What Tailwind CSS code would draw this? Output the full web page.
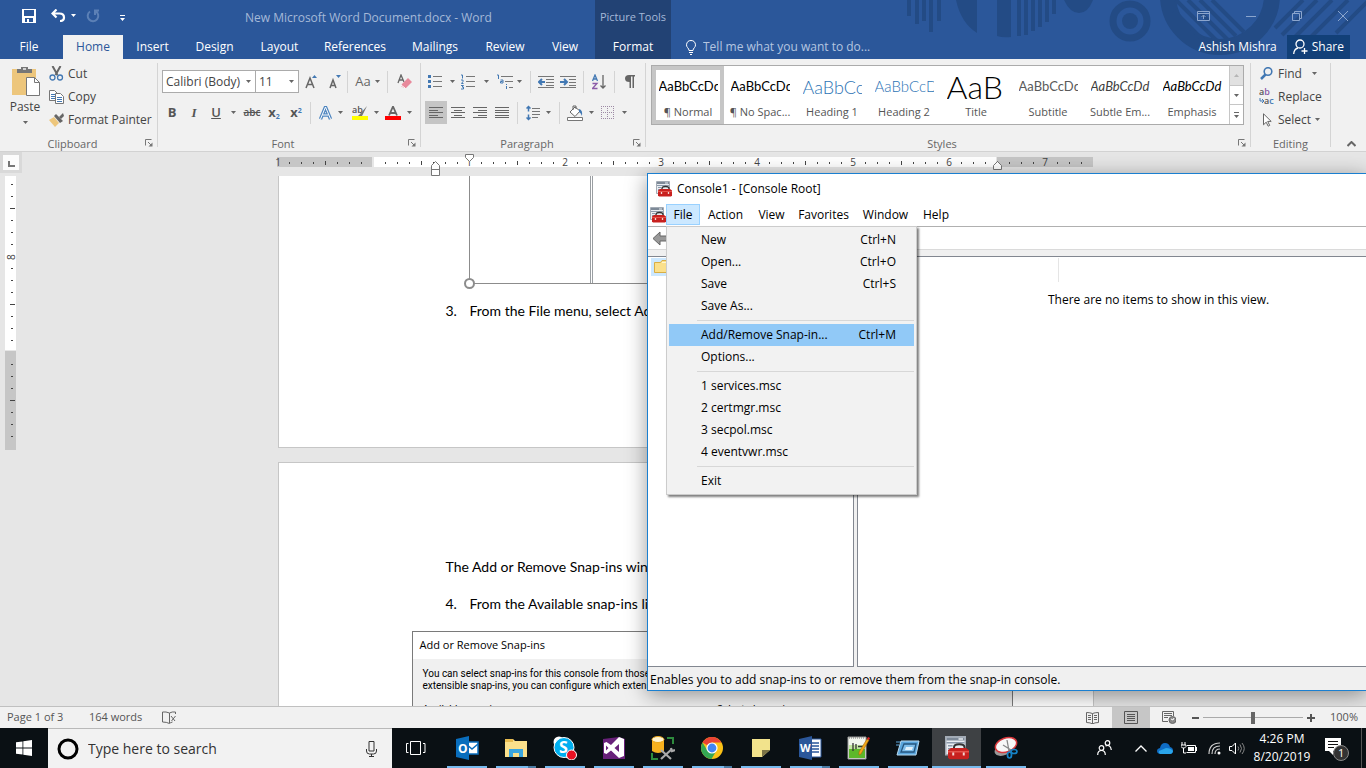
<!DOCTYPE html>
<html lang="en">
<head>
    <meta charset="UTF-8">
    <meta name="viewport" content="width=device-width, initial-scale=1.0">
    <title>New Microsoft Word Document.docx - Word</title>
    <script src="https://cdn.jsdelivr.net/npm/@tailwindcss/browser@4"></script>
</head>
<body class="flex flex-col h-screen overflow-hidden bg-[#e6e6e6] font-['Open_Sans',sans-serif] text-xs text-[#444]">
    <!-- Shared symbols -->
    <svg class="hidden">
        <symbol id="caret" viewBox="0 0 5 3"><path d="M0 0h5L2.500 3z" fill="#666"/></symbol>
        <symbol id="launcher" viewBox="0 0 8 8"><path d="M.5 6.500v-6h6M3 3l3 3" fill="none" stroke="#777"/><path d="M7.500 3.500v4h-4z" fill="#777"/></symbol>
        <symbol id="toolbox" viewBox="0 0 16 16">
            <path d="M.5 .5h13v12H.5z" fill="#e9edf1" stroke="#a3abb5"/>
            <path d="M1 1h12v2H1z" fill="#7d8997"/><path d="M9 2h3" stroke="#e9edf1"/>
            <path d="M1 4.500h12M2 6.500h3M2 8.500h3M2 10.500h2" stroke="#8c9aab"/>
            <path d="M6 9V7.500Q6 5.500 9.500 5.500T13 7.500V9" fill="none" stroke="#333" stroke-width="1.300"/>
            <path d="M2 9.500l2-1.500h10l2 1.500v5l-1 1H3l-1-1z" fill="#c8211f"/><path d="M2 10.500h14" stroke="#e5534b"/>
            <path d="M5.500 11v2M12.500 11v2" stroke="#f3d4d0" stroke-width="1.300"/>
        </symbol>
    </svg>

    <!-- Title bar and tabs -->
    <header class="relative flex shrink-0 bg-[#2b579a] text-white">
        <svg class="absolute right-0 top-0 w-[496px] h-[59px]" viewBox="0 0 496 59" fill="none" stroke="#234b85">
            <path d="M39 0v16M47 0v24M54 0v21M61 0v32M69 0v21" stroke-width="4"/>
            <path d="M86 0h21v33Q91 23 86 0zM127 0h14v37q-8 1-14-1z" fill="#234b85" stroke="none"/>
            <path d="M149 0v36M156 0v35M163 0v31M170 0v27M177 0v22M184 0v14" stroke-width="4"/>
            <path d="M194 0h29q-5 13-14 13T194 0z" fill="#234b85" stroke="none"/>
            <circle cx="260" cy="21" r="17" stroke-width="7"/><circle cx="260" cy="21" r="8" fill="#234b85" stroke="none"/>
            <circle cx="350" cy="-5" r="52" stroke-width="16"/>
            <path d="M306 0l44 44M318 0l40 40M330 0l36 36M342 0l32 32M304 11l34 34" stroke-width="4"/>
            <path d="M405 28l28-28M412 35l35-35M425 37l37-37M440 38l38-38M466 33l33-33" stroke-width="4"/>
        </svg>
        <div class="relative flex flex-col w-[595px]">
            <div class="flex items-center h-[35px] pl-[22px]">
                <button aria-label="Save"><svg class="w-[14px] h-[14px] -mt-1" viewBox="0 0 14 14"><path d="M0 0h14v14H0z" fill="#fff"/><path d="M2 1h10v6H2zM3 9h8v4H7v-3H5v3H3z" fill="#2b579a"/></svg></button>
                <button aria-label="Undo" class="flex items-center gap-[5px] ml-[15px] -mt-1"><svg class="w-[15px] h-[13px]" viewBox="0 0 15 13" fill="none" stroke="#fff" stroke-width="2.200"><path d="M5.500 .5L1.500 4.500l4 4M2 4.500h6.500q4.500 0 4.500 4 0 3.500-4 3.500"/></svg><svg class="w-[5px] h-[3px]" viewBox="0 0 5 3"><path d="M0 0h5L2.500 3z" fill="#fff"/></svg></button>
                <button aria-label="Repeat" class="ml-[10px] -mt-1"><svg class="w-[14px] h-[14px]" viewBox="0 0 14 14" fill="none" stroke="#5c80b6" stroke-width="2"><path d="M4 2.500a5.300 5.300 0 1 0 5.500-.3M9 6V1.500h4"/></svg></button>
                <button aria-label="Customize Quick Access Toolbar" class="ml-5"><svg class="w-[5px] h-[6px]" viewBox="0 0 5 6" fill="#fff"><path d="M0 0h5v1H0zM0 3h5L2.500 6z"/></svg></button>
                <h1 class="flex-1 ml-[120px] text-[#a5b9d8] whitespace-nowrap">New Microsoft Word Document.docx - Word</h1>
            </div>
            <nav class="flex h-6">
                <button class="w-[58px] mr-[5px]">File</button>
                <button class="w-[60px] bg-[#f1f1f1] text-[#2b579a]">Home</button>
                <button class="w-[59px]">Insert</button>
                <button class="w-[65px]">Design</button>
                <button class="w-[65px]">Layout</button>
                <button class="w-[86px]">References</button>
                <button class="w-[74px]">Mailings</button>
                <button class="w-[66px]">Review</button>
                <button class="w-[54px]">View</button>
            </nav>
        </div>
        <div class="relative flex flex-col w-[76px] bg-[#224274]">
            <span class="flex items-center justify-center h-[35px] text-[11px] text-[#a5b9d8] whitespace-nowrap">Picture Tools</span>
            <button class="h-6">Format</button>
        </div>
        <div class="relative flex flex-col flex-1">
            <div class="flex items-center justify-end h-[31px] pr-[18px] gap-8 text-[#8ba5cd]">
                <button aria-label="Ribbon Display Options"><svg class="w-[13px] h-[10px]" viewBox="0 0 13 10" fill="none" stroke="currentColor"><path d="M.5 .5h12v9H.5zM.5 2.500h12M6.500 8V4.500M4.500 6l2-2 2 2"/></svg></button>
                <button aria-label="Minimize"><svg class="w-[10px] h-[10px] ml-1" viewBox="0 0 10 10" stroke="currentColor"><path d="M0 5.500h10"/></svg></button>
                <button aria-label="Restore"><svg class="w-[10px] h-[10px] ml-1" viewBox="0 0 10 10" fill="none" stroke="currentColor"><path d="M.5 2.500h7v7h-7zM2.500 2V.5h7v7H8"/></svg></button>
                <button aria-label="Close"><svg class="w-[10px] h-[10px] ml-1" viewBox="0 0 10 10" stroke="currentColor"><path d="M0 0l10 10M10 0L0 10"/></svg></button>
            </div>
            <div class="flex items-center flex-1 pl-[15px] pr-4 pt-1">
                <label for="tell-me"><svg class="w-[10px] h-[15px]" viewBox="0 0 10 15" fill="none" stroke="#fff"><path d="M3 10.500Q3 9 1.500 7.500.5 6.500 .5 4.800 1 .5 5 .5t4.500 4.300q0 1.700-1 2.700Q7 9 7 10.500zM3 12.500h4M4 14.500h2"/></svg></label>
                <input id="tell-me" class="w-[180px] ml-[7px] bg-transparent placeholder-[#b5c6e0] outline-none" placeholder="Tell me what you want to do...">
                <span class="ml-auto">Ashish Mishra</span>
                <button class="flex items-center gap-1 h-6 ml-[10px] px-1.5 bg-[#124078]"><svg class="w-[15px] h-[16px]" viewBox="0 0 15 16" fill="none" stroke="#fff" stroke-width="1.300"><circle cx="7" cy="5" r="4"/><path d="M.7 15Q1 10 5 9M11.500 9v6M8.500 12h6"/></svg>Share</button>
            </div>
        </div>
    </header>

    <!-- Ribbon -->
    <div class="flex shrink-0 h-[93px] py-1 bg-[#f1f1f1] border-b border-[#d2d2d2]">
        <section class="flex flex-col w-[158px] border-r border-[#d4d4d4]">
            <div class="flex flex-1 pl-[9px] pt-[3px]">
                <button class="flex flex-col items-center w-8 mr-2">
                    <svg class="w-[29px] h-[31px] ml-0.5" viewBox="0 0 29 31"><path d="M0 3h24v26H0z" fill="#edc67c"/><path d="M5 3h4V1h7v2h4v4H5z" fill="#767676"/><path d="M11 3h3" stroke="#f1f1f1" stroke-width="1.500"/><path d="M14.500 11.500h8l5 5v13h-13z" fill="#fff" stroke="#777"/><path d="M22.500 11.500v5h5" fill="none" stroke="#777"/></svg>
                    <span class="mt-0.5">Paste</span>
                    <svg class="w-[5px] h-[3px] mt-1.5"><use href="#caret"/></svg>
                </button>
                <div class="flex flex-col -mt-1">
                    <button class="flex items-center gap-1 h-[23px]"><svg class="w-[15px] h-[15px]" viewBox="0 0 15 15" fill="none"><path d="M3.500 0l5 9M11.500 0l-5 9" stroke="#666" stroke-width="2"/><circle cx="3.500" cy="11.500" r="2.500" stroke="#4278b3" stroke-width="1.300"/><circle cx="11" cy="11.500" r="2.500" stroke="#4278b3" stroke-width="1.300"/></svg>Cut</button>
                    <button class="flex items-center gap-1 h-[23px]"><svg class="w-[15px] h-[14px]" viewBox="0 0 15 14" fill="#fff" stroke="#777"><path d="M.5 .5h5l3 3v7h-8z"/><path d="M2 4.500h4M2 6.500h4M2 8.500h4" stroke="#4278b3"/><path d="M6.500 3.500h5l3 3v7h-8z"/><path d="M8 7.500h5M8 9.500h5M8 11.500h5" stroke="#4278b3"/></svg>Copy</button>
                    <button class="flex items-center gap-1 h-[23px] whitespace-nowrap"><svg class="w-[15px] h-[14px]" viewBox="0 0 15 14"><path d="M0 7l5-3 5 6-4 4z" fill="#edc67c"/><path d="M5 3l2-2 7 7-3 2z" fill="#666"/><path d="M10 4l4-4 1 3-3 3z" fill="#666"/></svg>Format Painter</button>
                </div>
            </div>
            <footer class="flex items-center h-4 pt-2 text-[11px] leading-none text-[#666]"><span class="flex-1 text-center">Clipboard</span><button aria-label="Clipboard settings" class="mr-1"><svg class="w-2 h-2"><use href="#launcher"/></svg></button></footer>
        </section>

        <section class="flex flex-col w-[263px] border-r border-[#d4d4d4]">
            <div class="flex flex-col flex-1 gap-2 pl-1 pt-[7px]">
                <div class="flex items-center h-[23px]">
                    <div class="relative">
                        <select aria-label="Font" class="appearance-none w-[94px] h-[23px] px-[3px] bg-white border border-[#ababab]"><option>Calibri (Body)</option></select>
                        <svg class="absolute right-[5px] top-[10px] w-[5px] h-[3px]"><use href="#caret"/></svg>
                    </div>
                    <div class="relative">
                        <select aria-label="Font size" class="appearance-none w-[43px] h-[23px] px-[3px] bg-white border border-l-0 border-[#ababab]"><option>11</option></select>
                        <svg class="absolute right-[5px] top-[10px] w-[5px] h-[3px]"><use href="#caret"/></svg>
                    </div>
                    <button aria-label="Increase font size" class="flex justify-center w-6"><svg class="w-3 h-[14px]" viewBox="0 0 12 14"><path d="M1 13L5 3l4 10M2.500 9.500h5" fill="none" stroke="#666" stroke-width="1.500"/><path d="M7 3l2.500-3L12 3z" fill="#4278b3"/></svg></button>
                    <button aria-label="Decrease font size" class="flex justify-center w-6"><svg class="w-3 h-[14px]" viewBox="0 0 12 14"><path d="M1 13l3-8 3 8M2 10.500h4" fill="none" stroke="#666" stroke-width="1.500"/><path d="M7 0h5L9.500 3z" fill="#4278b3"/></svg></button>
                    <span class="w-px h-[22px] bg-[#d4d4d4]"></span>
                    <button class="flex items-center justify-center gap-1 w-10 text-[13px] text-[#666]">Aa<svg class="w-[5px] h-[3px]"><use href="#caret"/></svg></button>
                    <span class="w-px h-[22px] bg-[#d4d4d4]"></span>
                    <button aria-label="Clear formatting" class="flex justify-center w-8"><svg class="w-[15px] h-4" viewBox="0 0 15 16"><path d="M1 9l3-8 3 7M2 6h4" fill="none" stroke="#666" stroke-width="1.300"/><path d="M5 10l6-6 4 4-6 6H7l-3-2z" fill="#e8899b"/><path d="M4 11l4 3" stroke="#fff"/></svg></button>
                </div>
                <div class="flex items-center h-[23px]">
                    <button class="w-5 text-[13px] font-bold text-[#555]">B</button>
                    <button class="w-6 text-[13px] font-bold italic font-['Liberation_Serif',serif] text-[#555]">I</button>
                    <button class="w-5 text-[13px] font-semibold underline text-[#555]">U</button>
                    <button aria-label="Underline style" class="flex justify-center w-[14px]"><svg class="w-[5px] h-[3px]"><use href="#caret"/></svg></button>
                    <button class="w-6 text-[10px] font-semibold line-through text-[#555]">abc</button>
                    <button class="w-5 text-[13px] font-bold text-[#555] whitespace-nowrap">x<sub class="text-[7px] text-[#4278b3]">2</sub></button>
                    <button class="w-6 text-[13px] font-bold text-[#555] whitespace-nowrap">x<sup class="text-[7px] text-[#4278b3]">2</sup></button>
                    <span class="w-px h-[22px] mx-0.5 bg-[#d4d4d4]"></span>
                    <button aria-label="Text effects" class="flex items-center justify-center gap-1.5 w-9"><svg class="w-[13px] h-[14px]" viewBox="0 0 13 14" fill="none"><path d="M1.500 13l5-12 5 12M3.500 9h6" stroke="#4f86c0" stroke-width="3.400"/><path d="M1.500 13l5-12 5 12M3.500 9h6" stroke="#fff"/></svg><svg class="w-[5px] h-[3px]"><use href="#caret"/></svg></button>
                    <button aria-label="Text highlight colour" class="flex items-center justify-center gap-1.5 w-[33px]"><svg class="w-4 h-[15px]" viewBox="0 0 16 15"><text x="0" y="8" font-size="9" font-weight="600" fill="#555">ab</text><path d="M15 1L8 9l-2 2h4z" fill="#777"/><path d="M0 11h16v4H0z" fill="#ff0"/></svg><svg class="w-[5px] h-[3px]"><use href="#caret"/></svg></button>
                    <button aria-label="Font colour" class="flex items-center justify-center gap-1.5 w-8"><svg class="w-4 h-[14px]" viewBox="0 0 16 14"><path d="M4 9.500L8 .5l4 9M5.500 7h5" fill="none" stroke="#666" stroke-width="1.800"/><path d="M0 10h16v4H0z" fill="#f00"/></svg><svg class="w-[5px] h-[3px]"><use href="#caret"/></svg></button>
                </div>
            </div>
            <footer class="flex items-center h-4 pt-2 text-[11px] leading-none text-[#666]"><span class="flex-1 text-center">Font</span><button aria-label="Font settings" class="mr-1"><svg class="w-2 h-2"><use href="#launcher"/></svg></button></footer>
        </section>

        <section class="flex flex-col w-[225px] border-r border-[#d4d4d4]">
            <div class="flex flex-col flex-1 gap-2 pl-1 pt-[7px]">
                <div class="flex items-center h-[23px]">
                    <button aria-label="Bullets" class="flex items-center justify-center gap-2 w-[33px]"><svg class="w-[14px] h-[15px]" viewBox="0 0 14 15"><path d="M0 1h3v3H0zM0 6h3v3H0zM0 11h3v3H0z" fill="#4278b3"/><path d="M5 2.500h9M5 7.500h9M5 12.500h9" stroke="#777"/></svg><svg class="w-[5px] h-[3px]"><use href="#caret"/></svg></button>
                    <button aria-label="Numbering" class="flex items-center justify-center gap-2 w-[34px]"><svg class="w-[15px] h-[16px]" viewBox="0 0 15 16"><path d="M0 1h1.500v3.500M0 6h2v1.500L.5 9.500h2M0 11.500h2.500L1 13h1.500v2H0" fill="none" stroke="#4278b3"/><path d="M5 2.500h9M5 7.500h9M5 12.500h9" stroke="#777"/></svg><svg class="w-[5px] h-[3px]"><use href="#caret"/></svg></button>
                    <button aria-label="Multilevel list" class="flex items-center justify-center gap-1 w-[34px]"><svg class="w-[16px] h-[16px]" viewBox="0 0 16 16"><path d="M0 1h1.500v4M3.500 6h2.500v3H3.500V7.500h2M9.500 10v1M9.500 12v3" fill="none" stroke="#4278b3"/><path d="M4 2.500h12M8 7.500h8M12 13.500h4" stroke="#777"/></svg><svg class="w-[5px] h-[3px]"><use href="#caret"/></svg></button>
                    <span class="w-px h-[22px] mx-1 bg-[#d4d4d4]"></span>
                    <button aria-label="Decrease indent" class="flex justify-center w-[22px]"><svg class="w-4 h-3" viewBox="0 0 16 12" stroke="#777"><path d="M0 .5h16M8 3.500h8M8 6.500h8M8 9.500h8M0 11.500h16"/><path d="M7 6H1.500M4 3L1 6l3 3" fill="none" stroke="#4278b3" stroke-width="2"/></svg></button>
                    <button aria-label="Increase indent" class="flex justify-center w-[22px]"><svg class="w-4 h-3" viewBox="0 0 16 12" stroke="#777"><path d="M0 .5h16M9 3.500h7M9 6.500h7M9 9.500h7M0 11.500h16"/><path d="M0 6h6M4 3l3 3-3 3" fill="none" stroke="#4278b3" stroke-width="2"/></svg></button>
                    <span class="w-px h-[22px] mx-1 bg-[#d4d4d4]"></span>
                    <button aria-label="Sort" class="flex justify-center w-[22px]"><svg class="w-[14px] h-4" viewBox="0 0 14 16" fill="none"><path d="M.5 7L3 1l2.500 6M1.500 5h3" stroke="#4278b3" stroke-width="1.300"/><path d="M.5 9.500h4.500l-4.500 5h5" stroke="#8a5ba8" stroke-width="1.300"/><path d="M11 1v13M8.500 11.500L11 14l2.500-2.500" stroke="#666" stroke-width="1.300"/></svg></button>
                    <span class="w-px h-[22px] mx-1 bg-[#d4d4d4]"></span>
                    <button aria-label="Show formatting marks" class="flex justify-center w-[22px]"><svg class="w-[10px] h-[13px]" viewBox="0 0 10 13"><path d="M10 0v1.500H9V13H7.500V1.500H6V13H4.500V7Q0 7 0 3.500T4 0z" fill="#666"/></svg></button>
                </div>
                <div class="flex items-center h-[23px]">
                    <button aria-label="Align left" class="flex items-center justify-center w-[22px] h-[23px] bg-[#c5c5c5]"><svg class="w-[14px] h-[11px]" viewBox="0 0 14 11" stroke="#666"><path d="M0 .5h14M0 3.500h9M0 5.500h14M0 8.500h9M0 10.500h14"/></svg></button>
                    <button aria-label="Center" class="flex justify-center w-[22px]"><svg class="w-[14px] h-[11px]" viewBox="0 0 14 11" stroke="#666"><path d="M0 .5h14M3 3.500h8M0 5.500h14M3 8.500h8M0 10.500h14"/></svg></button>
                    <button aria-label="Align right" class="flex justify-center w-[22px]"><svg class="w-[14px] h-[11px]" viewBox="0 0 14 11" stroke="#666"><path d="M0 .5h14M5 3.500h9M0 5.500h14M5 8.500h9M0 10.500h14"/></svg></button>
                    <button aria-label="Justify" class="flex justify-center w-[22px]"><svg class="w-[14px] h-[11px]" viewBox="0 0 14 11" stroke="#666"><path d="M0 .5h14M0 3.500h14M0 5.500h14M0 8.500h14M0 10.500h14"/></svg></button>
                    <span class="w-px h-[22px] mx-1 bg-[#d4d4d4]"></span>
                    <button aria-label="Line spacing" class="flex items-center justify-center gap-1.5 w-[33px]"><svg class="w-[14px] h-[16px]" viewBox="0 0 14 16"><path d="M2.500 1.500v5M2.500 9.500v5M.5 3.500l2-2 2 2M.5 12.500l2 2 2-2" fill="none" stroke="#4278b3" stroke-width="1.500"/><path d="M6 3.500h8M6 6.500h8M6 9.500h8M6 12.500h6" stroke="#777"/></svg><svg class="w-[5px] h-[3px]"><use href="#caret"/></svg></button>
                    <span class="w-px h-[22px] mx-1 bg-[#d4d4d4]"></span>
                    <button aria-label="Shading" class="flex items-center justify-center gap-1.5 w-[33px]"><svg class="w-4 h-[16px]" viewBox="0 0 16 16"><path d="M3 7l5-5 5 4-5 5.500z" fill="#fff" stroke="#666"/><path d="M6 5V1h3v3" fill="none" stroke="#666"/><path d="M12 4q4 1 3 7-1-3-3-4z" fill="#4278b3"/><path d="M.5 12.500h15v3H.5z" fill="#fff" stroke="#777"/></svg><svg class="w-[5px] h-[3px]"><use href="#caret"/></svg></button>
                    <button aria-label="Borders" class="flex items-center justify-center gap-2 w-[34px]"><svg class="w-[13px] h-[13px]" viewBox="0 0 13 13" fill="none" stroke="#9d8aa5" stroke-dasharray="1 1"><path d="M0 .5h13M0 6.500h13M0 12.500h13M.5 0v13M6.500 0v13M12.500 0v13"/></svg><svg class="w-[5px] h-[3px]"><use href="#caret"/></svg></button>
                </div>
            </div>
            <footer class="flex items-center h-4 pt-2 text-[11px] leading-none text-[#666]"><span class="flex-1 text-center">Paragraph</span><button aria-label="Paragraph settings" class="mr-1"><svg class="w-2 h-2"><use href="#launcher"/></svg></button></footer>
        </section>

        <section class="flex flex-col flex-1 border-r border-[#d4d4d4]">
            <div class="flex-1 pl-[5px] pr-1.5 pt-0.5">
                <div class="flex h-[60px] bg-white border border-[#ababab] text-[11px] text-[#555]">
                    <div class="flex flex-1 overflow-hidden">
                        <button class="flex flex-col items-center justify-between w-[72px] h-[58px] pt-0.5 border-4 border-[#c6c6c6]"><span class="flex items-center w-[59px] h-[30px] overflow-hidden text-[13px] text-black font-['Lato',sans-serif]">AaBbCcDd</span><span class="whitespace-nowrap leading-4">¶ Normal</span></button>
                        <button class="flex flex-col items-center justify-between w-[72px] h-[58px] pt-1.5 pb-1"><span class="flex items-center w-[59px] h-[30px] overflow-hidden text-[13px] text-black font-['Lato',sans-serif]">AaBbCcDd</span><span class="whitespace-nowrap leading-4">¶ No Spac...</span></button>
                        <button class="flex flex-col items-center justify-between w-[72px] h-[58px] pt-1.5 pb-1"><span class="flex items-center w-[59px] h-[30px] overflow-hidden text-lg text-[#2e74b5] font-light font-['Lato',sans-serif]">AaBbCc</span><span class="whitespace-nowrap leading-4">Heading 1</span></button>
                        <button class="flex flex-col items-center justify-between w-[72px] h-[58px] pt-1.5 pb-1"><span class="flex items-center w-[59px] h-[30px] overflow-hidden text-[15px] text-[#2e74b5] font-light font-['Lato',sans-serif]">AaBbCcD</span><span class="whitespace-nowrap leading-4">Heading 2</span></button>
                        <button class="flex flex-col items-center justify-between w-[72px] h-[58px] pt-1.5 pb-1"><span class="flex items-center w-[59px] h-[30px] overflow-hidden text-[32px] text-black font-light font-['Lato',sans-serif]">AaB</span><span class="whitespace-nowrap leading-4">Title</span></button>
                        <button class="flex flex-col items-center justify-between w-[72px] h-[58px] pt-1.5 pb-1"><span class="flex items-center w-[59px] h-[30px] overflow-hidden text-[13px] text-[#5a5a5a] font-['Lato',sans-serif]">AaBbCcDd</span><span class="whitespace-nowrap leading-4">Subtitle</span></button>
                        <button class="flex flex-col items-center justify-between w-[72px] h-[58px] pt-1.5 pb-1"><span class="flex items-center w-[59px] h-[30px] overflow-hidden text-[13px] italic text-[#404040] font-['Lato',sans-serif]">AaBbCcDd</span><span class="whitespace-nowrap leading-4">Subtle Em...</span></button>
                        <button class="flex flex-col items-center justify-between w-[72px] h-[58px] pt-1.5 pb-1"><span class="flex items-center w-[59px] h-[30px] overflow-hidden text-[13px] italic text-black font-['Lato',sans-serif]">AaBbCcDd</span><span class="whitespace-nowrap leading-4">Emphasis</span></button>
                    </div>
                    <div class="flex flex-col w-[14px] border-l border-[#c6c6c6]">
                        <button aria-label="Scroll up" class="flex items-center justify-center flex-1 bg-[#e1e1e1]"><svg class="w-[5px] h-[3px]" viewBox="0 0 5 3"><path d="M0 3h5L2.500 0z" fill="#b5b5b5"/></svg></button>
                        <button aria-label="Scroll down" class="flex items-center justify-center flex-1 border-t border-[#c6c6c6]"><svg class="w-[5px] h-[3px]"><use href="#caret"/></svg></button>
                        <button aria-label="More styles" class="flex items-center justify-center flex-1 border-t border-[#c6c6c6]"><svg class="w-[5px] h-[6px]" viewBox="0 0 5 6" fill="#666"><path d="M0 0h5v1H0zM0 3h5L2.500 6z"/></svg></button>
                    </div>
                </div>
            </div>
            <footer class="flex items-center h-4 pt-2 text-[11px] leading-none text-[#666]"><span class="flex-1 text-center">Styles</span><button aria-label="Styles settings" class="mr-1"><svg class="w-2 h-2"><use href="#launcher"/></svg></button></footer>
        </section>

        <section class="flex flex-col w-[80px] border-r border-[#d4d4d4]">
            <div class="flex flex-col flex-1 pl-2 -mt-px">
                <button class="flex items-center gap-1 h-[23px]"><svg class="w-[15px] h-[13px]" viewBox="0 0 15 13" fill="none" stroke="#4278b3"><circle cx="9" cy="4.500" r="3.800" stroke-width="1.600"/><path d="M6.500 7.500L2 12" stroke-width="2.500"/></svg>Find<svg class="w-[5px] h-[3px] ml-1.5"><use href="#caret"/></svg></button>
                <button class="flex items-center gap-1 h-[23px]"><svg class="w-[15px] h-[17px]" viewBox="0 0 15 17" font-size="9" font-weight="600"><text x="0" y="7" fill="#555">a<tspan fill="#8a5ba8">b</tspan></text><text x="5" y="16" fill="#555">a<tspan fill="#4278b3">c</tspan></text><path d="M1 10v3h3M3 11l2 2-2 2" fill="none" stroke="#4278b3"/></svg>Replace</button>
                <button class="flex items-center gap-1 h-[23px]"><svg class="w-[15px] h-[14px]" viewBox="0 0 15 14"><path d="M4.500 .8v11l2.700-2.600 2 4 1.500-.8-2-4h3.500z" fill="#fff" stroke="#666"/></svg>Select<svg class="w-[5px] h-[3px]"><use href="#caret"/></svg></button>
            </div>
            <footer class="flex items-center justify-center h-4 pt-2 text-[11px] leading-none text-[#666]">Editing</footer>
        </section>
        <div class="flex items-end justify-end w-[35px] pr-2.5">
            <button aria-label="Collapse the ribbon"><svg class="w-[9px] h-[6px]" viewBox="0 0 9 6" fill="none" stroke="#666" stroke-width="2"><path d="M.5 5l4-4 4 4"/></svg></button>
        </div>
    </div>

    <!-- Document workspace -->
    <main class="relative flex flex-1 min-h-0 overflow-hidden">
        <div class="w-[22px] shrink-0">
            <button aria-label="Tab selector" class="flex items-center justify-center w-[22px] h-[21px] bg-[#d9d9d9]"><svg class="w-4 h-[15px]" viewBox="0 0 16 15"><path d="M0 0h16v15H0z" fill="#fcfcfc"/><path d="M6 6v5h6" fill="none" stroke="#777" stroke-width="2"/></svg></button>
            <svg class="w-[17px] h-[277px] mt-[3px]" viewBox="0 0 17 277">
                <defs><pattern id="vticks" width="17" height="96" y="80" patternUnits="userSpaceOnUse"><path d="M11 12.500h2M11 24.500h2M11 36.500h2M10 48.500h5M11 60.500h2M11 72.500h2M11 84.500h2" stroke="#444"/></pattern></defs>
                <path d="M5 0h11v174H5z" fill="#fff"/><path d="M5 175h11v99H5z" fill="#c6c6c6"/><path d="M5 0h11v274H5z" fill="url(#vticks)"/>
                <text x="-84" y="15" transform="rotate(-90)" font-size="10" fill="#444">8</text>
            </svg>
        </div>
        <div class="flex flex-col items-center flex-1 pr-[17px] pt-[5px]">
            <svg class="w-[822px] h-[19px] shrink-0 overflow-visible" viewBox="0 0 822 19" font-size="10" text-anchor="middle" fill="#444">
                <defs><pattern id="hticks" x="2" width="96" height="19" patternUnits="userSpaceOnUse"><path d="M12.500 5v2M24.500 5v2M36.500 5v2M48.500 4v4M60.500 5v2M72.500 5v2M84.500 5v2" stroke="#444"/></pattern></defs>
                <path d="M2 0h95v10H2zM722 0h96v10h-96z" fill="#c6c6c6"/><path d="M99 0h622v10H99z" fill="#fff"/><path d="M4 0h813v10H4z" fill="url(#hticks)"/>
                <text x="3" y="9">1</text><text x="194" y="9">1</text><text x="290" y="9">2</text><text x="386" y="9">3</text><text x="482" y="9">4</text><text x="578" y="9">5</text><text x="674" y="9">6</text><text x="770" y="9">7</text>
                <g fill="#fff" stroke="#777"><path d="M190.500 -2.500h8v3l-4 4-4-4zM156.500 18.500v-10l4-4 4 4v10zM156.500 12.500h8M718.500 12.500v-4l4-4 4 4v4z"/></g>
            </svg>
            <!-- Page 1 -->
            <article class="w-[816px] h-[272px] shrink-0 bg-white border border-t-0 border-[#c6c6c6] text-black text-sm font-['Lato',sans-serif]">
                <div class="relative w-[544px] h-[108px] ml-[190px] border-l border-b border-[#8c8c8c]">
                    <div class="w-[123px] h-[107px] border-r-3 border-double border-[#9a9ea2]"></div>
                    <span class="absolute -left-1.5 -bottom-1.5 w-[11px] h-[11px] rounded-full bg-white border-2 border-[#8c8c8c]"></span>
                </div>
                <ol start="3" class="list-none pl-[167px] pt-[17px]"><li class="flex"><span class="w-6">3.</span>From the File menu, select Add/Remove Snap-in</li></ol>
            </article>
            <!-- Page 2 -->
            <article class="w-[816px] flex-1 min-h-0 mt-[14px] overflow-hidden bg-white border border-b-0 border-[#c6c6c6] text-black text-sm font-['Lato',sans-serif]">
                <p class="pl-[167px] pt-[94px]">The Add or Remove Snap-ins window</p>
                <p class="flex pl-[167px] pt-[17px]"><span class="w-6">4.</span>From the Available snap-ins list</p>
                <div class="w-[601px] h-[200px] ml-[133px] mt-[17px] border border-[#7a7a7a] bg-[#f0f0f0] font-['Open_Sans',sans-serif]">
                    <h2 class="h-[27px] pl-[7px] bg-white text-[11px] leading-[26px]">Add or Remove Snap-ins</h2>
                    <p class="pl-[10px] pt-[9px] text-[10px] leading-3 whitespace-nowrap font-['Roboto',sans-serif]">You can select snap-ins for this console from those available<br>extensible snap-ins, you can configure which extensions</p>
                    <div class="grid grid-cols-2 pt-3 pl-[10px] text-[10px] leading-3 font-['Roboto',sans-serif]"><span>Available snap-ins:</span><span>Selected snap-ins:</span></div>
                </div>
            </article>
        </div>

        <!-- Console window floating over the document -->
        <section class="absolute left-[647px] -right-px top-[21px] bottom-[15px] flex flex-col bg-[#f0f0f0] border border-[#1a7fd0] text-black shadow-[0_4px_20px_rgba(0,0,0,0.4)]">
            <header class="flex items-center gap-[5px] h-[29px] pl-2 bg-white shrink-0"><svg class="w-4 h-4"><use href="#toolbox"/></svg><h2>Console1 - [Console Root]</h2></header>
            <nav class="relative flex items-center h-[24px] pl-0.5 bg-white border-b border-[#b0b0b0] shrink-0">
                <svg class="w-4 h-4"><use href="#toolbox"/></svg>
                <button class="w-[34px] h-[21px] bg-[#cce8ff] border border-[#99d1ff]">File</button>
                <button class="w-[51px]">Action</button>
                <button class="w-[41px]">View</button>
                <button class="w-[63px]">Favorites</button>
                <button class="w-[61px]">Window</button>
                <button class="w-[40px]">Help</button>
                <!-- File menu -->
                <ul class="absolute left-[18px] top-[23px] z-10 w-[251px] p-0.5 bg-[#f2f2f2] border border-[#ccc] shadow-[2px_2px_2px_rgba(0,0,0,0.5)]">
                    <li><button class="flex items-center justify-between w-full h-[22px] pl-8 pr-[18px]"><span>New</span><span>Ctrl+N</span></button></li>
                    <li><button class="flex items-center justify-between w-full h-[22px] pl-8 pr-[18px]"><span>Open...</span><span>Ctrl+O</span></button></li>
                    <li><button class="flex items-center justify-between w-full h-[22px] pl-8 pr-[18px]"><span>Save</span><span>Ctrl+S</span></button></li>
                    <li><button class="flex items-center w-full h-[22px] pl-8">Save As...</button></li>
                    <li class="h-px my-[3px] ml-7 bg-[#d7d7d7]"></li>
                    <li><button class="flex items-center justify-between w-full h-[22px] pl-8 pr-[18px] bg-[#91c9f7]"><span>Add/Remove Snap-in...</span><span>Ctrl+M</span></button></li>
                    <li><button class="flex items-center w-full h-[22px] pl-8">Options...</button></li>
                    <li class="h-px my-[3px] ml-7 bg-[#d7d7d7]"></li>
                    <li><button class="flex items-center w-full h-[22px] pl-8">1 services.msc</button></li>
                    <li><button class="flex items-center w-full h-[22px] pl-8">2 certmgr.msc</button></li>
                    <li><button class="flex items-center w-full h-[22px] pl-8">3 secpol.msc</button></li>
                    <li><button class="flex items-center w-full h-[22px] pl-8">4 eventvwr.msc</button></li>
                    <li class="h-px my-[3px] ml-7 bg-[#d7d7d7]"></li>
                    <li><button class="flex items-center w-full h-[22px] pl-8">Exit</button></li>
                </ul>
            </nav>
            <div class="flex items-center h-[23px] pl-1 bg-white border-b border-[#dadada] shrink-0">
                <button aria-label="Back"><svg class="w-[17px] h-[15px]" viewBox="0 0 17 15"><path d="M1 7.500L8 1v4h8v5H8v4z" fill="#999" stroke="#666"/></svg></button>
            </div>
            <div class="flex flex-1 min-h-0 mt-1.5 gap-[3px]">
                <div class="w-[206px] shrink-0 pl-[3px] pt-px bg-white border border-l-0 border-[#828790]">
                    <div class="flex items-center w-[60px] h-[18px] pl-[3px] bg-[#cce8ff]"><svg class="w-4 h-[14px]" viewBox="0 0 16 14"><path d="M.5 12.500v-10h6l1.500-2h6.500v12z" fill="#fbe08b" stroke="#d9ae45"/><path d="M8 2.500h6" stroke="#fff6d0"/></svg></div>
                </div>
                <div class="flex-1 bg-white border border-r-0 border-[#828790]">
                    <div class="w-[201px] h-6 mt-px border-r border-[#e5e5e5]"></div>
                    <p class="pl-[190px] pt-2.5 whitespace-nowrap">There are no items to show in this view.</p>
                </div>
            </div>
            <footer class="flex items-center h-[23px] pl-0.5 pt-0.5 shrink-0 whitespace-nowrap">Enables you to add snap-ins to or remove them from the snap-in console.</footer>
        </section>
    </main>

    <!-- Word status bar -->
    <div class="relative flex items-center shrink-0 h-[22px] pl-[7px] pr-2 bg-[#f1f1f1] border-t border-[#c0c0c0] text-[11px] text-[#555]">
        <span class="w-[82px]">Page 1 of 3</span><span class="w-[73px]">164 words</span>
        <button aria-label="Proofing errors"><svg class="w-[15px] h-[13px]" viewBox="0 0 15 13" fill="none" stroke="#666"><path d="M7.500 12V2Q4 .5 .5 1v10q4 0 7 1.500 1-1 3-1.500M7.500 2Q10 .5 13.500 1v2M9 5l4 5M13.500 5l-4 5"/></svg></button>
        <div class="flex items-center h-full ml-auto">
            <button aria-label="Read mode" class="flex justify-center w-[40px]"><svg class="w-[13px] h-[12px]" viewBox="0 0 13 12" fill="none" stroke="#666"><path d="M6.500 12V1.500Q4 .5 .5 .5v10q4 0 6 1.500 2-1.500 6-1.500V.5q-3.500 0-6 1M2 3.500h3M2 5.500h3M2 7.500h3M8 3.500h3M8 5.500h3M8 7.500h3"/></svg></button>
            <button aria-label="Print layout" class="flex items-center justify-center w-[38px] h-full bg-[#c6c6c6]"><svg class="w-[14px] h-[13px]" viewBox="0 0 14 13" fill="none" stroke="#555"><path d="M.5 .5h13v12H.5zM3 3.500h8M3 5.500h8M3 7.500h8M3 9.500h8"/></svg></button>
            <button aria-label="Web layout" class="flex justify-center w-[37px]"><svg class="w-[14px] h-[13px]" viewBox="0 0 14 13" fill="none" stroke="#666"><path d="M6 10.500H.5V.5h11V5M2 2.500h8M2 4.500h8M2 6.500h4"/><circle cx="10.500" cy="9" r="3.500" fill="#888"/><path d="M9 8l2 1 1-2" stroke="#fff"/></svg></button>
            <button aria-label="Zoom out" class="flex justify-center w-4"><svg class="w-[7px] h-[2px]" viewBox="0 0 7 2"><path d="M0 0h7v2H0z" fill="#555"/></svg></button>
            <div class="relative flex items-center w-[100px] h-3">
                <input type="range" min="10" max="190" value="100" aria-label="Zoom" class="absolute inset-0 w-full opacity-0">
                <span class="w-full h-px bg-[#aaa]"></span>
                <span class="absolute left-[48px] top-0 w-1 h-3 bg-[#666]"></span>
            </div>
            <button aria-label="Zoom in" class="flex justify-center w-4"><svg class="w-2 h-2" viewBox="0 0 8 8"><path d="M3 0h2v3h3v2H5v3H3V5H0V3h3z" fill="#555"/></svg></button>
            <button class="w-[39px] text-right">100%</button>
        </div>
    </div>

    <!-- Windows taskbar -->
    <footer class="flex shrink-0 h-10 bg-[#0a1014] text-white">
        <button aria-label="Start" class="flex items-center justify-center w-12"><svg class="w-4 h-4" viewBox="0 0 16 16" fill="#fff"><path d="M0 2.300l6.500-.9v6.200H0zM7.300 1.200L16 0v7.600H7.300zM0 8.400h6.500v6.200L0 13.700zM7.300 8.400H16V16l-8.700-1.200z"/></svg></button>
        <div class="flex items-center w-[344px] px-[9px] bg-[#f2f2f2] border-t border-[#b9b9b9]">
            <label for="search"><svg class="w-[22px] h-[22px]" viewBox="0 0 22 22"><circle cx="11" cy="11" r="9" fill="none" stroke="#000" stroke-width="3"/></svg></label>
            <input id="search" class="flex-1 min-w-0 ml-[9px] bg-transparent text-sm outline-none placeholder-[#333]" placeholder="Type here to search">
            <button aria-label="Voice search" class="mr-[6px]"><svg class="w-[11px] h-4" viewBox="0 0 11 16" fill="none" stroke="#333"><path d="M3 .5h5v9.500H3zM.5 8v2q0 3 3 3h4q3 0 3-3V8M5.500 13v2.500M3 15.500h5"/></svg></button>
        </div>
        <button aria-label="Task View" class="flex items-center justify-center w-12 mr-0.5"><svg class="w-5 h-[14px]" viewBox="0 0 20 14" fill="none" stroke="#fff"><path d="M4.500 .5h10v13h-10zM2.500 2.500h-2v9h2M17 2.500h2v9h-2"/></svg></button>
        <nav class="flex">
            <button aria-label="Outlook" class="flex flex-col items-center justify-between w-[49px] pt-2"><svg class="w-6 h-6" viewBox="0 0 24 24"><path d="M11 6h12v12H11z" fill="#fff" stroke="#0a6ebd" stroke-width="1.500"/><path d="M11 8l6 5 6-5" fill="none" stroke="#0a6ebd" stroke-width="1.500"/><path d="M1 3l13-3v24L1 21z" fill="#0a6ebd"/><text x="3" y="17" font-size="12" font-weight="bold" fill="#fff">O</text></svg><span class="w-10 h-0.5 bg-[#76b9ed]"></span></button>
            <button aria-label="File Explorer" class="flex flex-col items-center justify-between w-[49px] pt-2"><svg class="w-6 h-6" viewBox="0 0 24 24"><path d="M1 3h8l2 2h12v16H1z" fill="#fbe08b"/><path d="M1 3h8v3H1z" fill="#e9bc4f"/><path d="M5 21v-8h14v8h-4v-4H9v4z" fill="#3aa6df"/></svg><span class="w-10 h-0.5 bg-[#76b9ed] border-r-8 border-[#4b7ba3]"></span></button>
            <button aria-label="Skype" class="flex flex-col items-center justify-between w-[49px] pt-2"><svg class="w-6 h-6" viewBox="0 0 24 24"><circle cx="6" cy="6" r="5.500" fill="#fff"/><circle cx="16" cy="17" r="5.500" fill="#fff"/><circle cx="11" cy="11.500" r="10" fill="#00aff0" stroke="#fff"/><text x="6" y="17" font-size="16" font-weight="bold" fill="#fff">S</text><circle cx="18.500" cy="19" r="5" fill="#e81123" stroke="#fff"/></svg><span class="w-10 h-0.5 bg-[#76b9ed]"></span></button>
            <button aria-label="Visual Studio" class="flex flex-col items-center justify-between w-[49px] pt-2"><svg class="w-6 h-6" viewBox="0 0 24 24"><path d="M1 3l16-2 6 2v20H1z" fill="#68217a"/><path d="M17 1l5 2v17l-5 2L9 14.500l-4.500 3.500L2 17V7l2.500-1L9 9zM17 8l-4.500 4 4.500 4zM4 9.500v5L6.500 12z" fill="#fff" fill-rule="evenodd"/></svg><span class="w-10 h-0.5 bg-[#76b9ed]"></span></button>
            <button aria-label="SQL tools" class="flex flex-col items-center justify-between w-[49px] pt-2"><svg class="w-6 h-6" viewBox="0 0 24 24"><path d="M1 3v12q6 4 12 0V3z" fill="#f6b01e"/><ellipse cx="7" cy="3.500" rx="6" ry="3" fill="#fff3d0" stroke="#e8a51a"/><path d="M16 2h6v6M1 17v6h6" fill="none" stroke="#2e8b3d" stroke-width="2"/><path d="M10 14l10 9M21 13l-11 10M20 12l1 3 3-1" fill="none" stroke="#aaa" stroke-width="2.200"/></svg><span class="w-10 h-0.5 bg-[#76b9ed]"></span></button>
            <button aria-label="Chrome" class="flex flex-col items-center justify-between w-[49px] pt-2"><svg class="w-6 h-6" viewBox="0 0 24 24"><circle cx="12" cy="12" r="11" fill="#fbc116"/><path d="M12 12L2.500 6.500A11 11 0 0 1 21.500 6.500H12z" fill="#ea4335"/><path d="M2.500 6.500A11 11 0 0 0 11.500 23l5-8.500L7 14z" fill="#34a853"/><circle cx="12" cy="12" r="5" fill="#4285f4" stroke="#fff" stroke-width="1.200"/></svg><span class="w-10 h-0.5 bg-[#76b9ed] border-r-8 border-[#4b7ba3]"></span></button>
            <button aria-label="Sticky Notes" class="flex flex-col items-center justify-between w-[49px] pt-2"><svg class="w-6 h-6" viewBox="0 0 24 24"><path d="M3 3h18v11l-8 7H3z" fill="#f2e38c"/><path d="M13 21v-7h8z" fill="#7b7345"/></svg><span class="w-10 h-0.5 bg-[#76b9ed]"></span></button>
            <button aria-label="Word" class="flex flex-col items-center justify-between w-[49px] pt-2"><svg class="w-6 h-6" viewBox="0 0 24 24"><path d="M12 3h11v18H12z" fill="#fff" stroke="#2b579a"/><path d="M14 7h7M14 10h7M14 13h7M14 16h7" stroke="#2b579a" stroke-width="1.300"/><path d="M1 3l13-3v24L1 21z" fill="#2b579a"/><text x="2" y="16" font-size="11" font-weight="bold" fill="#fff">W</text></svg><span class="w-10 h-0.5 bg-[#76b9ed] border-r-8 border-[#4b7ba3]"></span></button>
            <button aria-label="Notepad++" class="flex flex-col items-center justify-between w-[49px] pt-2"><svg class="w-6 h-6" viewBox="0 0 24 24"><path d="M1 1h18v22H1z" fill="#f2f6ef" stroke="#999"/><path d="M2 9h16v4H2z" fill="#c5e8a4"/><path d="M2 13h16v9H2z" fill="#5cb82a"/><path d="M2 2h16" stroke="#777" stroke-dasharray="1 1"/><path d="M6 7v8M9 8v5M11 10.500h5" stroke="#333" stroke-width="1.300"/><path d="M20 3l2 1-8 14-2 1v-3z" fill="#f0a818" stroke="#a9670c" stroke-width=".6"/><path d="M20 3l1-2 2 1-1 2z" fill="#d22"/></svg><span class="w-10 h-0.5 bg-[#76b9ed]"></span></button>
            <button aria-label="Run" class="flex flex-col items-center justify-between w-[49px] pt-2"><svg class="w-6 h-6" viewBox="0 0 24 24"><path d="M5 5h18l-3 14H1z" fill="#5aa5dc" stroke="#b8dcf3"/><path d="M8 8h12l-2 8H5z" fill="#7fbde9" stroke="#24557f" stroke-width="1.300"/><path d="M10 11h7l-1 3H9z" fill="#e2f1fb"/><path d="M0 6h4M0 9h3" stroke="#5aa5dc"/></svg><span class="w-10 h-0.5 bg-[#76b9ed]"></span></button>
            <button aria-label="Management Console" class="flex flex-col items-center justify-between w-[49px] pt-2 bg-[#3e4144]"><svg class="w-6 h-6"><use href="#toolbox"/></svg><span class="w-full h-0.5 bg-[#76b9ed]"></span></button>
            <button aria-label="Snipping Tool" class="flex flex-col items-center justify-between w-[49px] pt-2"><svg class="w-6 h-6" viewBox="0 0 24 24"><ellipse cx="10" cy="13" rx="10" ry="6" transform="rotate(-25 10 13)" fill="#999"/><ellipse cx="12" cy="9" rx="11" ry="7" transform="rotate(-20 12 9)" fill="#f7f7f7" stroke="#d8383c" stroke-width="1.500"/><path d="M13 4l2 11M9 9l8 5" stroke="#888" stroke-width="1.300"/><g fill="none" stroke="#1583c7" stroke-width="1.700"><ellipse cx="15.500" cy="19" rx="2" ry="3"/><ellipse cx="20" cy="15.500" rx="3" ry="2"/></g></svg><span class="w-10 h-0.5 bg-[#76b9ed]"></span></button>
        </nav>
        <div class="flex items-center ml-auto">
            <button aria-label="People" class="mr-[23px]"><svg class="w-[15px] h-[16px]" viewBox="0 0 15 16" fill="none" stroke="#fff" stroke-width="1.200"><circle cx="4.500" cy="8" r="2.300"/><path d="M.7 15q0-4.500 3.800-4.500T8.300 15"/><circle cx="10.500" cy="3" r="2.300"/><path d="M8.500 6q5-2 5.800 4"/></svg></button>
            <button aria-label="Show hidden icons" class="mr-2.5"><svg class="w-3 h-[7px]" viewBox="0 0 12 7" fill="none" stroke="#fff" stroke-width="1.300"><path d="M.5 6.500L6 1l5.500 5.500"/></svg></button>
            <button aria-label="OneDrive" class="mr-2"><svg class="w-4 h-[11px]" viewBox="0 0 16 11"><path d="M4 11Q0 11 0 8q0-2.500 3-3Q4 0 8 0t5 4q3 .5 3 3.500T13 11z" fill="#0f6cc4"/><path d="M3 11Q1 10 2 8l7-3q5 0 7 3-.5 3-3 3z" fill="#2aa5ea"/></svg></button>
            <button aria-label="Battery" class="mr-[11px]"><svg class="w-4 h-[12px]" viewBox="0 0 16 12"><path d="M1 0v3M4 0v3M0 3h5v1.500L3.500 6h-2L0 4.500zM2.500 6v5H5M6 3.500h8.500v7h-9" fill="none" stroke="#fff"/><path d="M7 5h6v4H7zM15 5h1v4h-1z" fill="#fff"/></svg></button>
            <button aria-label="Network" class="mr-2"><svg class="w-[13px] h-[13px]" viewBox="0 0 13 13" fill="none" stroke="#ccc" stroke-width="1.200"><path d="M1 12Q1 1 12 1M4 12q0-8 8-8M7 12q0-5 5-5"/><circle cx="11" cy="11" r="1.500" fill="#fff" stroke="none"/></svg></button>
            <button aria-label="Volume" class="mr-[5px]"><svg class="w-4 h-[13px]" viewBox="0 0 16 13" fill="none" stroke="#fff"><path d="M.5 4.500H3l3.500-3.500v11L3 8.500H.5z"/><path d="M9 4.500q1.500 2 0 4M11 2.500q3 4 0 8M13 1q4.500 5.500 0 11" stroke="#888"/></svg></button>
            <button class="w-[64px] text-center leading-[18px]">4:26 PM<br>8/20/2019</button>
            <button aria-label="Notifications" class="ml-[11px] mr-[11px]"><svg class="w-[25px] h-[26px]" viewBox="0 0 25 26"><path d="M0 3h16v13H8v4l-4-4H0z" fill="#fff"/><path d="M3 6.500h10M3 9.500h10M3 12.500h6" stroke="#111"/><circle cx="16" cy="18" r="7.500" fill="#333" stroke="#888"/><text x="13" y="22" font-size="11" fill="#fff">1</text></svg></button>
            <span class="w-px h-full mr-1 bg-[#555]"></span>
        </div>
    </footer>
</body>
</html>
